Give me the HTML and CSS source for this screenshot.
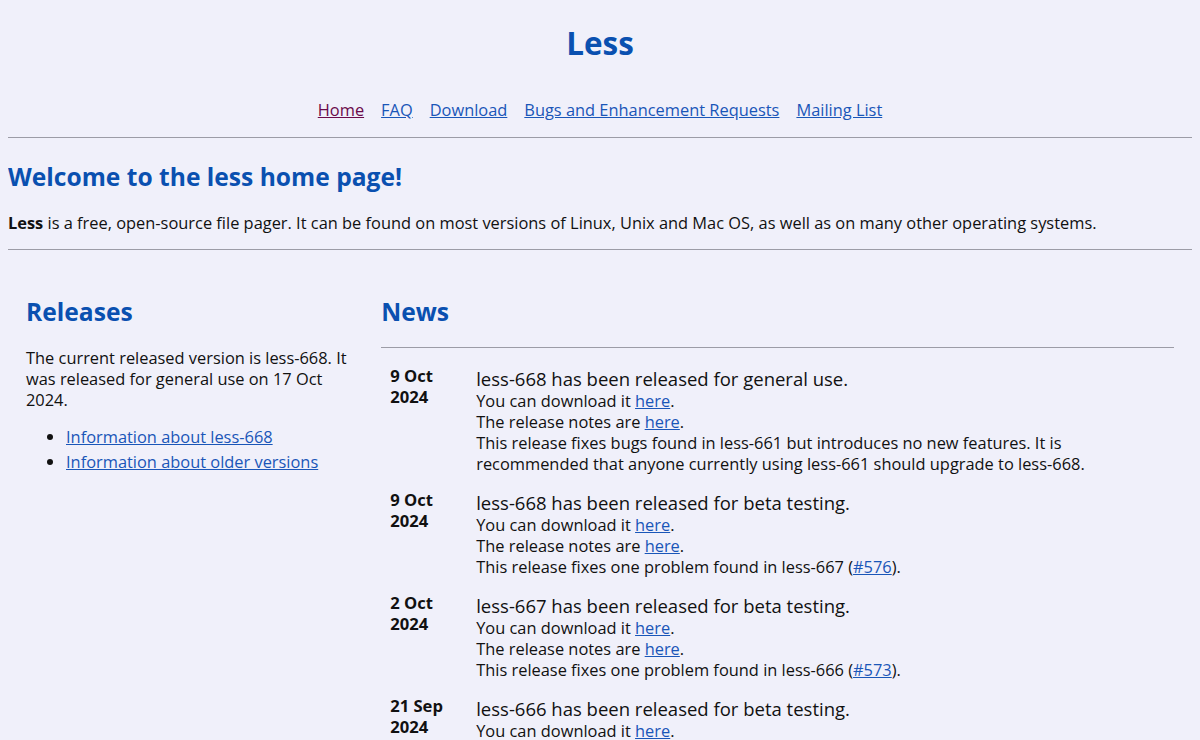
FILE: index.html
```html
<!DOCTYPE html>
<html lang="en">
<head>
    <meta charset="UTF-8">
    <title>Less</title>
    <link rel="stylesheet" href="styles.css">
</head>
<body>
    <h1 class="title">Less</h1>
    <div class="nav">
        <a href="#" class="visited">Home</a>
        <a href="#">FAQ</a>
        <a href="#">Download</a>
        <a href="#">Bugs and Enhancement Requests</a>
        <a href="#">Mailing List</a>
    </div>
    <hr>
    <h2 class="welcome">Welcome to the less home page!</h2>
    <p class="intro"><b>Less</b> is a free, open-source file pager. It can be found on most versions of Linux, Unix and Mac OS, as well as on many other operating systems.</p>
    <hr>

    <div class="columns">
        <div class="col side">
            <h2>Releases</h2>
            <p>The current released version is less-668. It was released for general use on 17 Oct 2024.</p>
            <ul>
                <li><a href="#">Information about less-668</a></li>
                <li><a href="#">Information about older versions</a></li>
            </ul>
        </div>

        <div class="col news">
            <h2>News</h2>
            <hr>
            <div class="entry">
                <div class="date">9 Oct 2024</div>
                <div class="text">
                    <div class="headline">less-668 has been released for general use.</div>
                    You can download it <a href="#">here</a>.<br>
                    The release notes are <a href="#">here</a>.<br>
                    This release fixes bugs found in less-661 but introduces no new features. It is recommended that anyone currently using less-661 should upgrade to less-668.
                </div>
            </div>
            <div class="entry">
                <div class="date">9 Oct 2024</div>
                <div class="text">
                    <div class="headline">less-668 has been released for beta testing.</div>
                    You can download it <a href="#">here</a>.<br>
                    The release notes are <a href="#">here</a>.<br>
                    This release fixes one problem found in less-667 (<a href="#">#576</a>).
                </div>
            </div>
            <div class="entry">
                <div class="date">2 Oct 2024</div>
                <div class="text">
                    <div class="headline">less-667 has been released for beta testing.</div>
                    You can download it <a href="#">here</a>.<br>
                    The release notes are <a href="#">here</a>.<br>
                    This release fixes one problem found in less-666 (<a href="#">#573</a>).
                </div>
            </div>
            <div class="entry">
                <div class="date">21 Sep 2024</div>
                <div class="text">
                    <div class="headline">less-666 has been released for beta testing.</div>
                    You can download it <a href="#">here</a>.<br>
                    The release notes are <a href="#">here</a>.<br>
                    This release fixes two problems found in less-665.
                </div>
            </div>
        </div>
    </div>
</body>
</html>
```

FILE: styles.css
```css
body {
    font-family: "Open Sans", "Noto Sans", sans-serif;
    font-size: 16.4px;
    line-height: 21.3px;
    background: #f0f0fa;
    color: #111;
    margin: 8px;
}

a {
    color: #1a56b8;
}

a.visited {
    color: #6b0b4b;
}

hr {
    border: 0;
    border-top: 1px solid #9c9ca6;
    height: 0;
    margin: 0;
}

h1, h2 {
    color: #0a50b0;
    font-weight: bold;
}

.title {
    font-size: 31.4px;
    line-height: 40px;
    text-align: center;
    margin: 15px 0 0;
}

.nav {
    display: flex;
    justify-content: center;
    gap: 17px;
    margin: 36px 0 17px;
}

h2 {
    font-size: 24.6px;
    line-height: 30px;
}

.welcome {
    margin: 24px 0 0;
}

.intro {
    margin: 20px 0 15px;
}

.columns {
    display: flex;
}

.col {
    padding: 0 18px 18px;
}

.side {
    width: 30%;
    flex: none;
    box-sizing: border-box;
    padding-right: 10px;
}

.news {
    flex: 1;
}

.col h2 {
    margin: 47px 0 0;
}

.side p {
    margin: 20px 0 16px;
}

.side ul {
    margin: 0;
    padding-left: 40px;
}

.side li {
    margin-bottom: 3px;
}

.news hr {
    margin: 20px 0 12px;
}

.entry {
    display: grid;
    grid-template-columns: 86px 1fr;
    padding: 8px 20px 9px 9px;
}

.date {
    font-weight: bold;
    font-size: 16.6px;
    width: 62px;
    margin-top: -3px;
}

.headline {
    font-size: 18.5px;
    line-height: 22px;
}
```
